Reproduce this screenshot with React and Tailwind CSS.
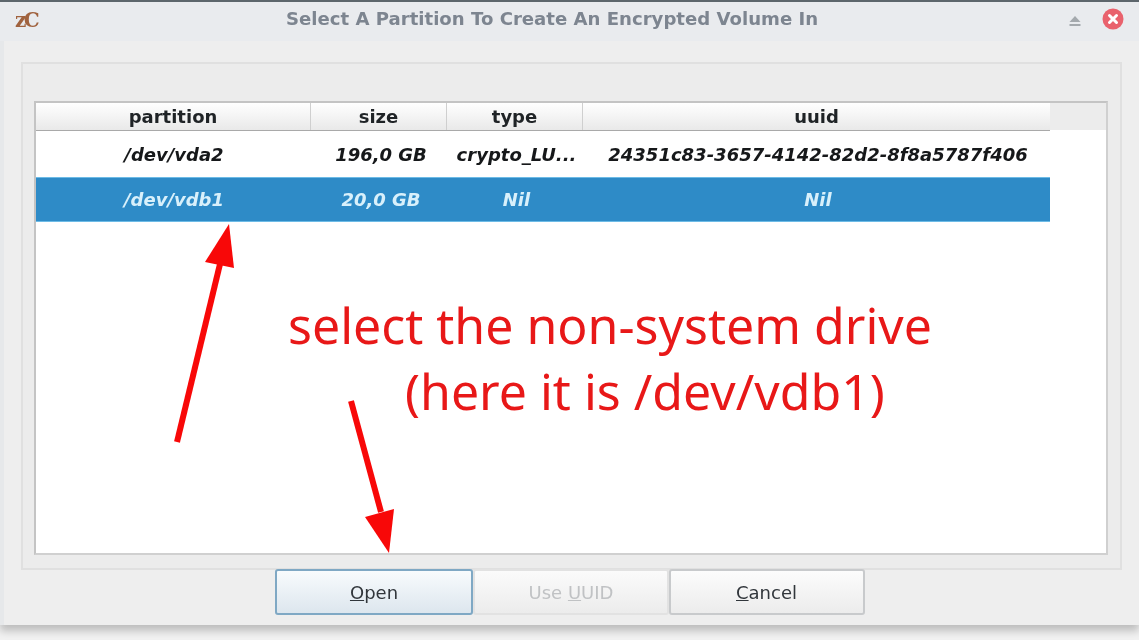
import React from "react";

const dejavu = "font-['DejaVu_Sans',sans-serif]";

function Row({ cells, selected }) {
  return (
    <div className={`grid grid-cols-[276px_135px_136px_467px] items-center w-[1014px] italic font-bold text-[18px] ${selected ? "h-[45px] bg-[#2e8bc7] text-[#d8f0fb] border-y border-[#6dbbe6]" : "h-[46px] text-[#16181a]"}`}>
      {cells.map((c, i) => (
        <div key={i} className={`text-center whitespace-nowrap overflow-hidden ${i > 0 ? "pl-[3px]" : ""}`}>{c}</div>
      ))}
    </div>
  );
}

function Head({ children, last }) {
  return (
    <div className={`flex items-center justify-center h-full bg-gradient-to-b from-[#ffffff] to-[#e9e9e9] text-[#1f2326] ${last ? "" : "border-r border-[#cfcfcf]"}`}>{children}</div>
  );
}

function Btn({ children, kind, width }) {
  const cls = kind === "open"
    ? "border-[#7fa8c4] from-[#f8fbfd] to-[#dde6ee] text-[#31363b]"
    : kind === "off"
    ? "border-[#e2e2e2] from-[#fbfbfb] to-[#ececec] text-[#c0c2c4]"
    : "border-[#c8cacc] from-[#fcfcfc] to-[#ececec] text-[#31363b]";
  return (
    <div className={`flex items-center justify-center h-[46px] rounded-[3px] border-2 bg-gradient-to-b text-[18px] ${width} ${cls}`}>{children}</div>
  );
}

export default function App() {
  return (
    <div className="w-[1139px] h-[640px] overflow-hidden bg-[#f2f2f2]">
      <div className={`relative w-[1139px] h-[640px] bg-[#f2f2f2] blur-[0.7px] ${dejavu}`}>
        <div className="h-[625px] flex flex-col bg-[#eeeeee] border-t-2 border-[#5d666c] shadow-[0_6px_8px_rgba(0,0,0,0.22)]">
          <div className="relative flex items-center h-[39px] shrink-0 bg-[#e9ebee] pl-[286px] pb-[5px]">
            <span className="absolute left-[15px] top-[4px] font-['DejaVu_Serif',serif] font-bold text-[20px] leading-[28px] tracking-[-2.5px] text-[#a0623e]">zC</span>
            <span className="font-bold text-[18.1px] text-[#7d8590] whitespace-nowrap">Select A Partition To Create An Encrypted Volume In</span>
            <svg className="absolute left-[1068px] top-[12px]" width="14" height="14" viewBox="0 0 14 14">
              <path d="M7 2 L12.5 8 H1.5 Z" fill="#a4a9ad" />
              <rect x="1.5" y="10" width="11" height="2" fill="#a4a9ad" />
            </svg>
            <svg className="absolute left-[1102px] top-[6px]" width="22" height="22" viewBox="0 0 22 22">
              <circle cx="11" cy="11" r="10.5" fill="#e9626d" />
              <path d="M7.5 7.5 L14.5 14.5 M14.5 7.5 L7.5 14.5" stroke="#fff" strokeWidth="3" strokeLinecap="round" />
            </svg>
          </div>
          <div className="flex-1 flex flex-col pt-[21px] border-l-4 border-[#e6e8ea] pl-[17px]">
            <div className="w-[1101px] h-[508px] border-2 border-[#e0e0e0] bg-[#ececec] pl-[11px] pt-[37px]">
              <div className="w-[1074px] h-[454px] border-2 border-[#c4c4c4] border-b-[#d0d0d0] border-r-[#d0d0d0] bg-white">
                <div className="h-[27px] bg-[#ececec] font-bold text-[18px]">
                  <div className="grid grid-cols-[275px_136px_136px_467px] w-[1014px] h-[27px]">
                    <Head>partition</Head>
                    <Head>size</Head>
                    <Head>type</Head>
                    <Head last>uuid</Head>
                  </div>
                </div>
                <div className="w-[1014px] h-[1px] bg-[#a9a9a9]" />
                <Row cells={["/dev/vda2", "196,0 GB", "crypto_LU...", "24351c83-3657-4142-82d2-8f8a5787f406"]} />
                <Row selected cells={["/dev/vdb1", "20,0 GB", "Nil", "Nil"]} />
              </div>
            </div>
            <div className="flex justify-start pl-[254px] -mt-[1px]">
              <Btn kind="open" width="w-[198px]"><span><u>O</u>pen</span></Btn>
              <Btn kind="off" width="w-[196px]"><span>Use <u>U</u>UID</span></Btn>
              <Btn width="w-[196px]"><span className="-ml-[1px]"><u>C</u>ancel</span></Btn>
            </div>
          </div>
        </div>

        <div className="absolute left-[288px] top-[292px] font-['Noto_Sans',sans-serif] text-[50px] leading-[66px] text-[#e81818] whitespace-nowrap">
          <div>select the non-system drive</div>
          <div className="pl-[117px]">(here it is /dev/vdb1)</div>
        </div>
        <svg className="absolute left-0 top-0 pointer-events-none" width="1139" height="640" viewBox="0 0 1139 640">
          <path d="M177 442 L220 264" stroke="#f80808" strokeWidth="6" fill="none" />
          <path d="M229 224 L234 268 L205 262 Z" fill="#f80808" />
          <path d="M351 401 L381 512" stroke="#f80808" strokeWidth="6" fill="none" />
          <path d="M389 553 L365 517 L394 509 Z" fill="#f80808" />
        </svg>
      </div>
    </div>
  );
}
